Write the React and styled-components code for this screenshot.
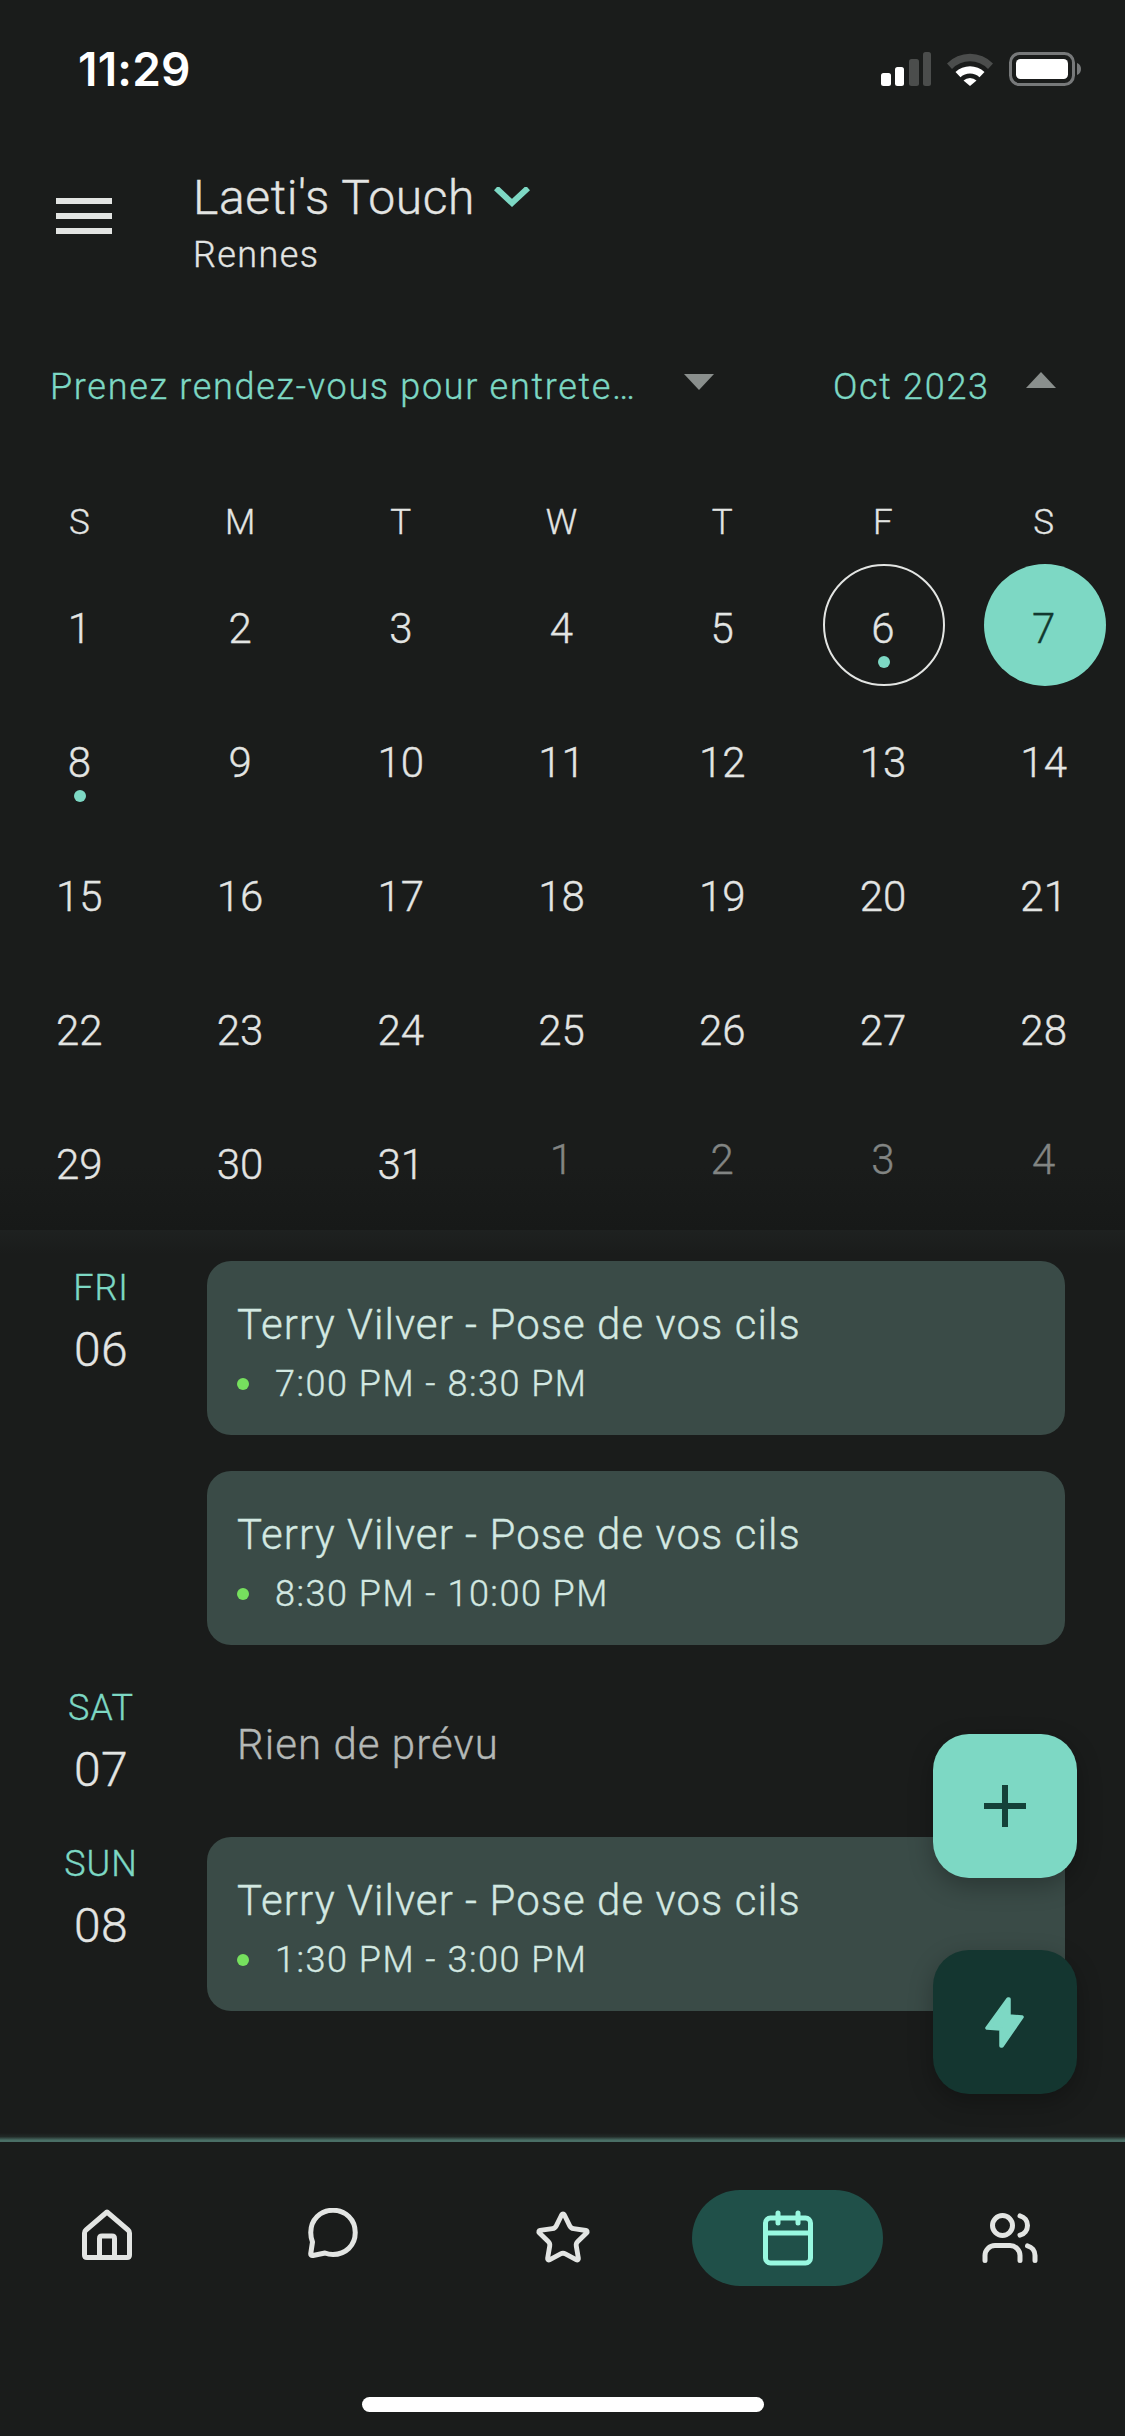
import React from 'react';
import styled, { createGlobalStyle } from 'styled-components';
import { Star, Calendar, Users } from 'lucide-react';

const Global = createGlobalStyle`
  html, body { margin: 0; padding: 0; background: #1a1c1b; }
  * { box-sizing: border-box; }
`;

const Page = styled.div`
  position: relative;
  width: 1125px;
  height: 2436px;
  display: flex;
  flex-direction: column;
  overflow: hidden;
  background: #1a1c1b;
  color: #e3e5e3;
  font-family: Roboto, "Liberation Sans", sans-serif;
  font-weight: 300;
  -webkit-text-stroke-width: 0.35px;
`;

const StatusBar = styled.div`
  height: 132px;
  flex: none;
  padding: 0 44px 0 78px;
  display: flex;
  align-items: flex-start;
  justify-content: space-between;
`;
const Clock = styled.div`
  font-family: Inter, sans-serif;
  font-weight: 600;
  font-size: 46px;
  line-height: 54px;
  margin-top: 42px;
  color: #fff;
  letter-spacing: 0.2px;
  -webkit-text-stroke-width: 0;
`;
const StatusIcons = styled.div`
  display: flex;
  align-items: center;
  gap: 16px;
  margin-top: 52px;
  height: 34px;
`;

const Header = styled.header`
  flex: none;
  display: flex;
  align-items: flex-start;
  padding: 36px 0 0 56px;
  height: 213px;
`;
const MenuButton = styled.div`
  width: 137px;
  padding-top: 30px;
  display: flex;
  flex-direction: column;
  gap: 9px;
`;
const MenuBar = styled.span`
  display: block;
  width: 56px;
  height: 6px;
  background: #e2e4e2;
`;
const TitleRow = styled.div`
  display: flex;
  align-items: center;
  gap: 19px;
  height: 60px;
`;
const Title = styled.div`
  font-size: 48px;
  line-height: 60px;
  letter-spacing: 0.6px;
  color: #e3e5e3;
`;
const Subtitle = styled.div`
  font-size: 36px;
  line-height: 58px;
  letter-spacing: 1.4px;
  margin-top: -2px;
  color: #e3e5e3;
`;

const FilterRow = styled.div`
  flex: none;
  height: 80px;
  display: flex;
  align-items: center;
  padding-left: 50px;
`;
const FilterText = styled.div`
  font-size: 36px;
  letter-spacing: 1.7px;
  padding-top: 3px;
  color: #7dd8c4;
  white-space: nowrap;
  width: ${p => p.$w}px;
`;
const Triangle = styled.span`
  width: 0;
  height: 0;
  border-left: 15px solid transparent;
  border-right: 15px solid transparent;
  ${p => (p.$up ? 'border-bottom' : 'border-top')}: 16px solid #8a8f8d;
  margin-top: ${p => (p.$up ? -10 : -6)}px;
  margin-right: ${p => p.$mr || 0}px;
`;

const CalendarGrid = styled.section`
  flex: none;
  display: grid;
  grid-template-columns: repeat(7, 1fr);
  grid-template-rows: 133px repeat(5, 134px);
  height: 805px;
  background: linear-gradient(#1a1c1b 92%, #171918 100%);
`;
const WeekDay = styled.div`
  display: flex;
  justify-content: center;
  align-items: flex-end;
  padding: 0 2px 15px 0;
  font-size: 35px;
  line-height: 40px;
  color: #e3e5e3;
`;
const DayCell = styled.div`
  position: relative;
  display: flex;
  align-items: center;
  justify-content: center;
`;
const DayCircle = styled.div`
  width: 122px;
  height: 122px;
  border-radius: 50%;
  display: flex;
  align-items: center;
  justify-content: center;
  background: ${p => (p.$selected ? '#7dd8c4' : 'transparent')};
  border: ${p => (p.$today ? '2.5px solid #e3e5e3' : 'none')};
`;
const DayNum = styled.span`
  font-size: 42px;
  line-height: 50px;
  padding-top: ${p => (p.$muted ? 0 : 8)}px;
  padding-bottom: ${p => (p.$muted ? 2 : 0)}px;
  padding-right: 2px;
  color: ${p => (p.$muted ? '#828583' : p.$selected ? '#12382f' : '#e3e5e3')};
`;
const EventDot = styled.i`
  position: absolute;
  left: 50%;
  top: 98px;
  width: 12px;
  height: 12px;
  margin-left: -6px;
  border-radius: 50%;
  background: #7dd8c4;
`;

const Agenda = styled.section`
  flex: 1;
  padding-top: 31px;
  background: linear-gradient(#1e2120, #1a1c1b 24px);
  display: flex;
  flex-direction: column;
  gap: 36px;
`;
const DayGroup = styled.div`
  display: grid;
  grid-template-columns: 207px 858px;
`;
const DayLabel = styled.div`
  display: flex;
  flex-direction: column;
  align-items: center;
  padding-right: 5px;
`;
const DayName = styled.div`
  font-size: 36px;
  line-height: 54px;
  letter-spacing: 1px;
  color: #7dd8c4;
`;
const DayNumber = styled.div`
  font-size: 48px;
  line-height: 66px;
  padding-top: 2px;
  margin-bottom: -2px;
  letter-spacing: 0.5px;
  color: #e3e5e3;
`;
const Events = styled.div`
  display: flex;
  flex-direction: column;
  gap: 36px;
`;
const EventCard = styled.div`
  height: 174px;
  border-radius: 24px;
  background: #3a4b47;
  padding: 37px 30px 0;
`;
const EventTitle = styled.div`
  font-size: 42px;
  line-height: 54px;
  letter-spacing: 1.05px;
  color: #d3e8e1;
`;
const EventTime = styled.div`
  display: flex;
  align-items: center;
  gap: 26px;
  margin-top: 5px;
  font-size: 36px;
  line-height: 54px;
  letter-spacing: 1.5px;
  color: #d3e8e1;
`;
const GreenDot = styled.i`
  width: 12px;
  height: 12px;
  border-radius: 50%;
  background: #76e05e;
`;
const Empty = styled.div`
  padding: 36px 0 0 30px;
  font-size: 42px;
  line-height: 56px;
  letter-spacing: 1.05px;
  color: #b4b8b6;
  height: 120px;
`;

const Fabs = styled.div`
  position: absolute;
  left: 933px;
  top: 1734px;
  display: flex;
  flex-direction: column;
  gap: 72px;
`;
const Fab = styled.div`
  width: 144px;
  height: 144px;
  border-radius: 36px;
  display: flex;
  align-items: center;
  justify-content: center;
  background: ${p => (p.$dark ? '#143630' : '#7dd8c4')};
  box-shadow: 0 8px 24px rgba(0, 0, 0, 0.28);
`;

const NavLine = styled.div`
  flex: none;
  height: 9px;
  background: linear-gradient(rgba(74, 111, 102, 0) 0%, rgba(74, 111, 102, 0.15) 40%, #4a6f66 80%);
`;
const Nav = styled.nav`
  flex: none;
  position: relative;
  height: 294px;
  padding-top: 48px;
  display: grid;
  grid-template-columns: 214px 238px 221px 229px 216px;
  align-items: start;
  justify-items: center;
`;
const NavItem = styled.div`
  display: flex;
  align-items: center;
  justify-content: center;
  width: ${p => (p.$active ? 191 : 96)}px;
  height: 96px;
  border-radius: 48px;
  background: ${p => (p.$active ? '#205049' : 'transparent')};
  color: ${p => (p.$active ? '#98f8e0' : '#e3e5e3')};
`;
const HomeIndicator = styled.div`
  position: absolute;
  left: 362px;
  top: 255px;
  width: 402px;
  height: 15px;
  border-radius: 8px;
  background: #fff;
`;

const SignalIcon = () => (
  <svg width="50" height="34" viewBox="0 0 50 34">
    <rect x="0" y="21" width="10" height="13" rx="2.5" fill="#fff" />
    <rect x="14" y="15" width="9" height="19" rx="2.5" fill="#fff" />
    <rect x="28" y="7" width="10" height="27" rx="2.5" fill="#4b4d4c" />
    <rect x="42" y="0" width="8" height="34" rx="2.5" fill="#4b4d4c" />
  </svg>
);
const WifiIcon = () => (
  <svg width="46" height="34" viewBox="0 0 46 34">
    <path d="M0 11.5 A32 32 0 0 1 46 11.5 L41 17 A25 25 0 0 0 5 17 Z" fill="#4b4d4c" />
    <path d="M8.5 20 A21 21 0 0 1 37.5 20 L32.5 25.3 A14 14 0 0 0 13.5 25.3 Z" fill="#fff" />
    <path d="M16.5 28.5 A9.5 9.5 0 0 1 29.5 28.5 L23 34 Z" fill="#fff" />
  </svg>
);
const BatteryIcon = () => (
  <svg width="72" height="34" viewBox="0 0 72 34">
    <rect x="1.5" y="1.5" width="63" height="31" rx="9" fill="none" stroke="#77797a" strokeWidth="3" />
    <rect x="7" y="7" width="52" height="20" rx="4.5" fill="#fff" />
    <path d="M68 11 C71 12 72 14.5 72 17 C72 19.5 71 22 68 23 Z" fill="#77797a" />
  </svg>
);
const Chevron = () => (
  <svg width="36" height="22" viewBox="0 0 36 22" fill="none" stroke="#7dd8c4" strokeWidth="6">
    <path d="M2 1 L18 16 L34 1" />
  </svg>
);
const HomeIcon = () => (
  <svg width="60" height="60" viewBox="0 0 24 24" fill="none" stroke="currentColor" strokeWidth="2" strokeLinejoin="round">
    <path d="M12 1.6 L20.4 8.8 Q21 9.3 21 10 V18.8 Q21 19.8 20 19.8 H4 Q3 19.8 3 18.8 V10 Q3 9.3 3.6 8.8 Z" />
    <path d="M9 19.8 V12.2 Q9 11.2 10 11.2 H14 Q15 11.2 15 12.2 V19.8" />
  </svg>
);
const BubbleIcon = () => (
  <svg width="60" height="60" viewBox="0 0 24 24" fill="none" stroke="currentColor" strokeWidth="2" strokeLinejoin="round">
    <path d="M12 .9 C17 .9 20.9 4.6 20.9 9.8 C20.9 15 17 18.6 12 18.6 C10.8 18.6 9.8 18.4 8.8 18 L4 19 Q3 19.2 3.1 18.2 L3.8 13.6 C3.3 12.4 3.1 11 3.1 9.8 C3.1 4.6 7 .9 12 .9 Z" />
  </svg>
);
const PlusIcon = () => (
  <svg width="42" height="42" viewBox="0 0 42 42" stroke="#144139" strokeWidth="6">
    <path d="M21 0 V42 M0 21 H42" />
  </svg>
);
const BoltIcon = () => (
  <svg width="48" height="60" viewBox="-24 -30 48 60" fill="#7dd8c4" stroke="#7dd8c4" strokeWidth="3.5" strokeLinejoin="round">
    <polygon points="3,-23 -18,6 -4,7 -4,24 -3,24 17,-5 4,-6 4,-23" />
  </svg>
);

const weekDays = ['S', 'M', 'T', 'W', 'T', 'F', 'S'];
const days = [
  ...Array.from({ length: 31 }, (_, i) => ({ n: i + 1 })),
  ...[1, 2, 3, 4].map(n => ({ n, muted: true })),
];

const groups = [
  { name: 'FRI', num: '06', events: ['7:00 PM - 8:30 PM', '8:30 PM - 10:00 PM'] },
  { name: 'SAT', num: '07', empty: 'Rien de prévu' },
  { name: 'SUN', num: '08', events: ['1:30 PM - 3:00 PM'] },
];

export default function App() {
  return (
    <Page>
      <Global />
      <StatusBar>
        <Clock>11:29</Clock>
        <StatusIcons>
          <SignalIcon />
          <WifiIcon />
          <BatteryIcon />
        </StatusIcons>
      </StatusBar>

      <Header>
        <MenuButton>
          <MenuBar />
          <MenuBar />
          <MenuBar />
        </MenuButton>
        <div>
          <TitleRow>
            <Title>Laeti's Touch</Title>
            <Chevron />
          </TitleRow>
          <Subtitle>Rennes</Subtitle>
        </div>
      </Header>

      <FilterRow>
        <FilterText $w={634}>Prenez rendez-vous pour entrete…</FilterText>
        <Triangle $mr={119} />
        <FilterText $w={193}>Oct 2023</FilterText>
        <Triangle $up />
      </FilterRow>

      <CalendarGrid>
        {weekDays.map((d, i) => (
          <WeekDay key={i}>{d}</WeekDay>
        ))}
        {days.map((d, i) => {
          const today = !d.muted && d.n === 6;
          const selected = !d.muted && d.n === 7;
          const dot = !d.muted && (d.n === 6 || d.n === 8);
          return (
            <DayCell key={i}>
              <DayCircle $today={today} $selected={selected}>
                <DayNum $muted={d.muted} $selected={selected}>{d.n}</DayNum>
              </DayCircle>
              {dot && <EventDot />}
            </DayCell>
          );
        })}
      </CalendarGrid>

      <Agenda>
        {groups.map(g => (
          <DayGroup key={g.name}>
            <DayLabel>
              <DayName>{g.name}</DayName>
              <DayNumber>{g.num}</DayNumber>
            </DayLabel>
            {g.empty ? (
              <Empty>{g.empty}</Empty>
            ) : (
              <Events>
                {g.events.map(t => (
                  <EventCard key={t}>
                    <EventTitle>Terry Vilver - Pose de vos cils</EventTitle>
                    <EventTime>
                      <GreenDot />
                      {t}
                    </EventTime>
                  </EventCard>
                ))}
              </Events>
            )}
          </DayGroup>
        ))}
      </Agenda>

      <NavLine />
      <Nav>
        <NavItem><HomeIcon /></NavItem>
        <NavItem><BubbleIcon /></NavItem>
        <NavItem><Star size={58} strokeWidth={2} /></NavItem>
        <NavItem $active><Calendar size={60} strokeWidth={2} /></NavItem>
        <NavItem><Users size={60} strokeWidth={2} /></NavItem>
        <HomeIndicator />
      </Nav>

      <Fabs>
        <Fab><PlusIcon /></Fab>
        <Fab $dark><BoltIcon /></Fab>
      </Fabs>
    </Page>
  );
}
